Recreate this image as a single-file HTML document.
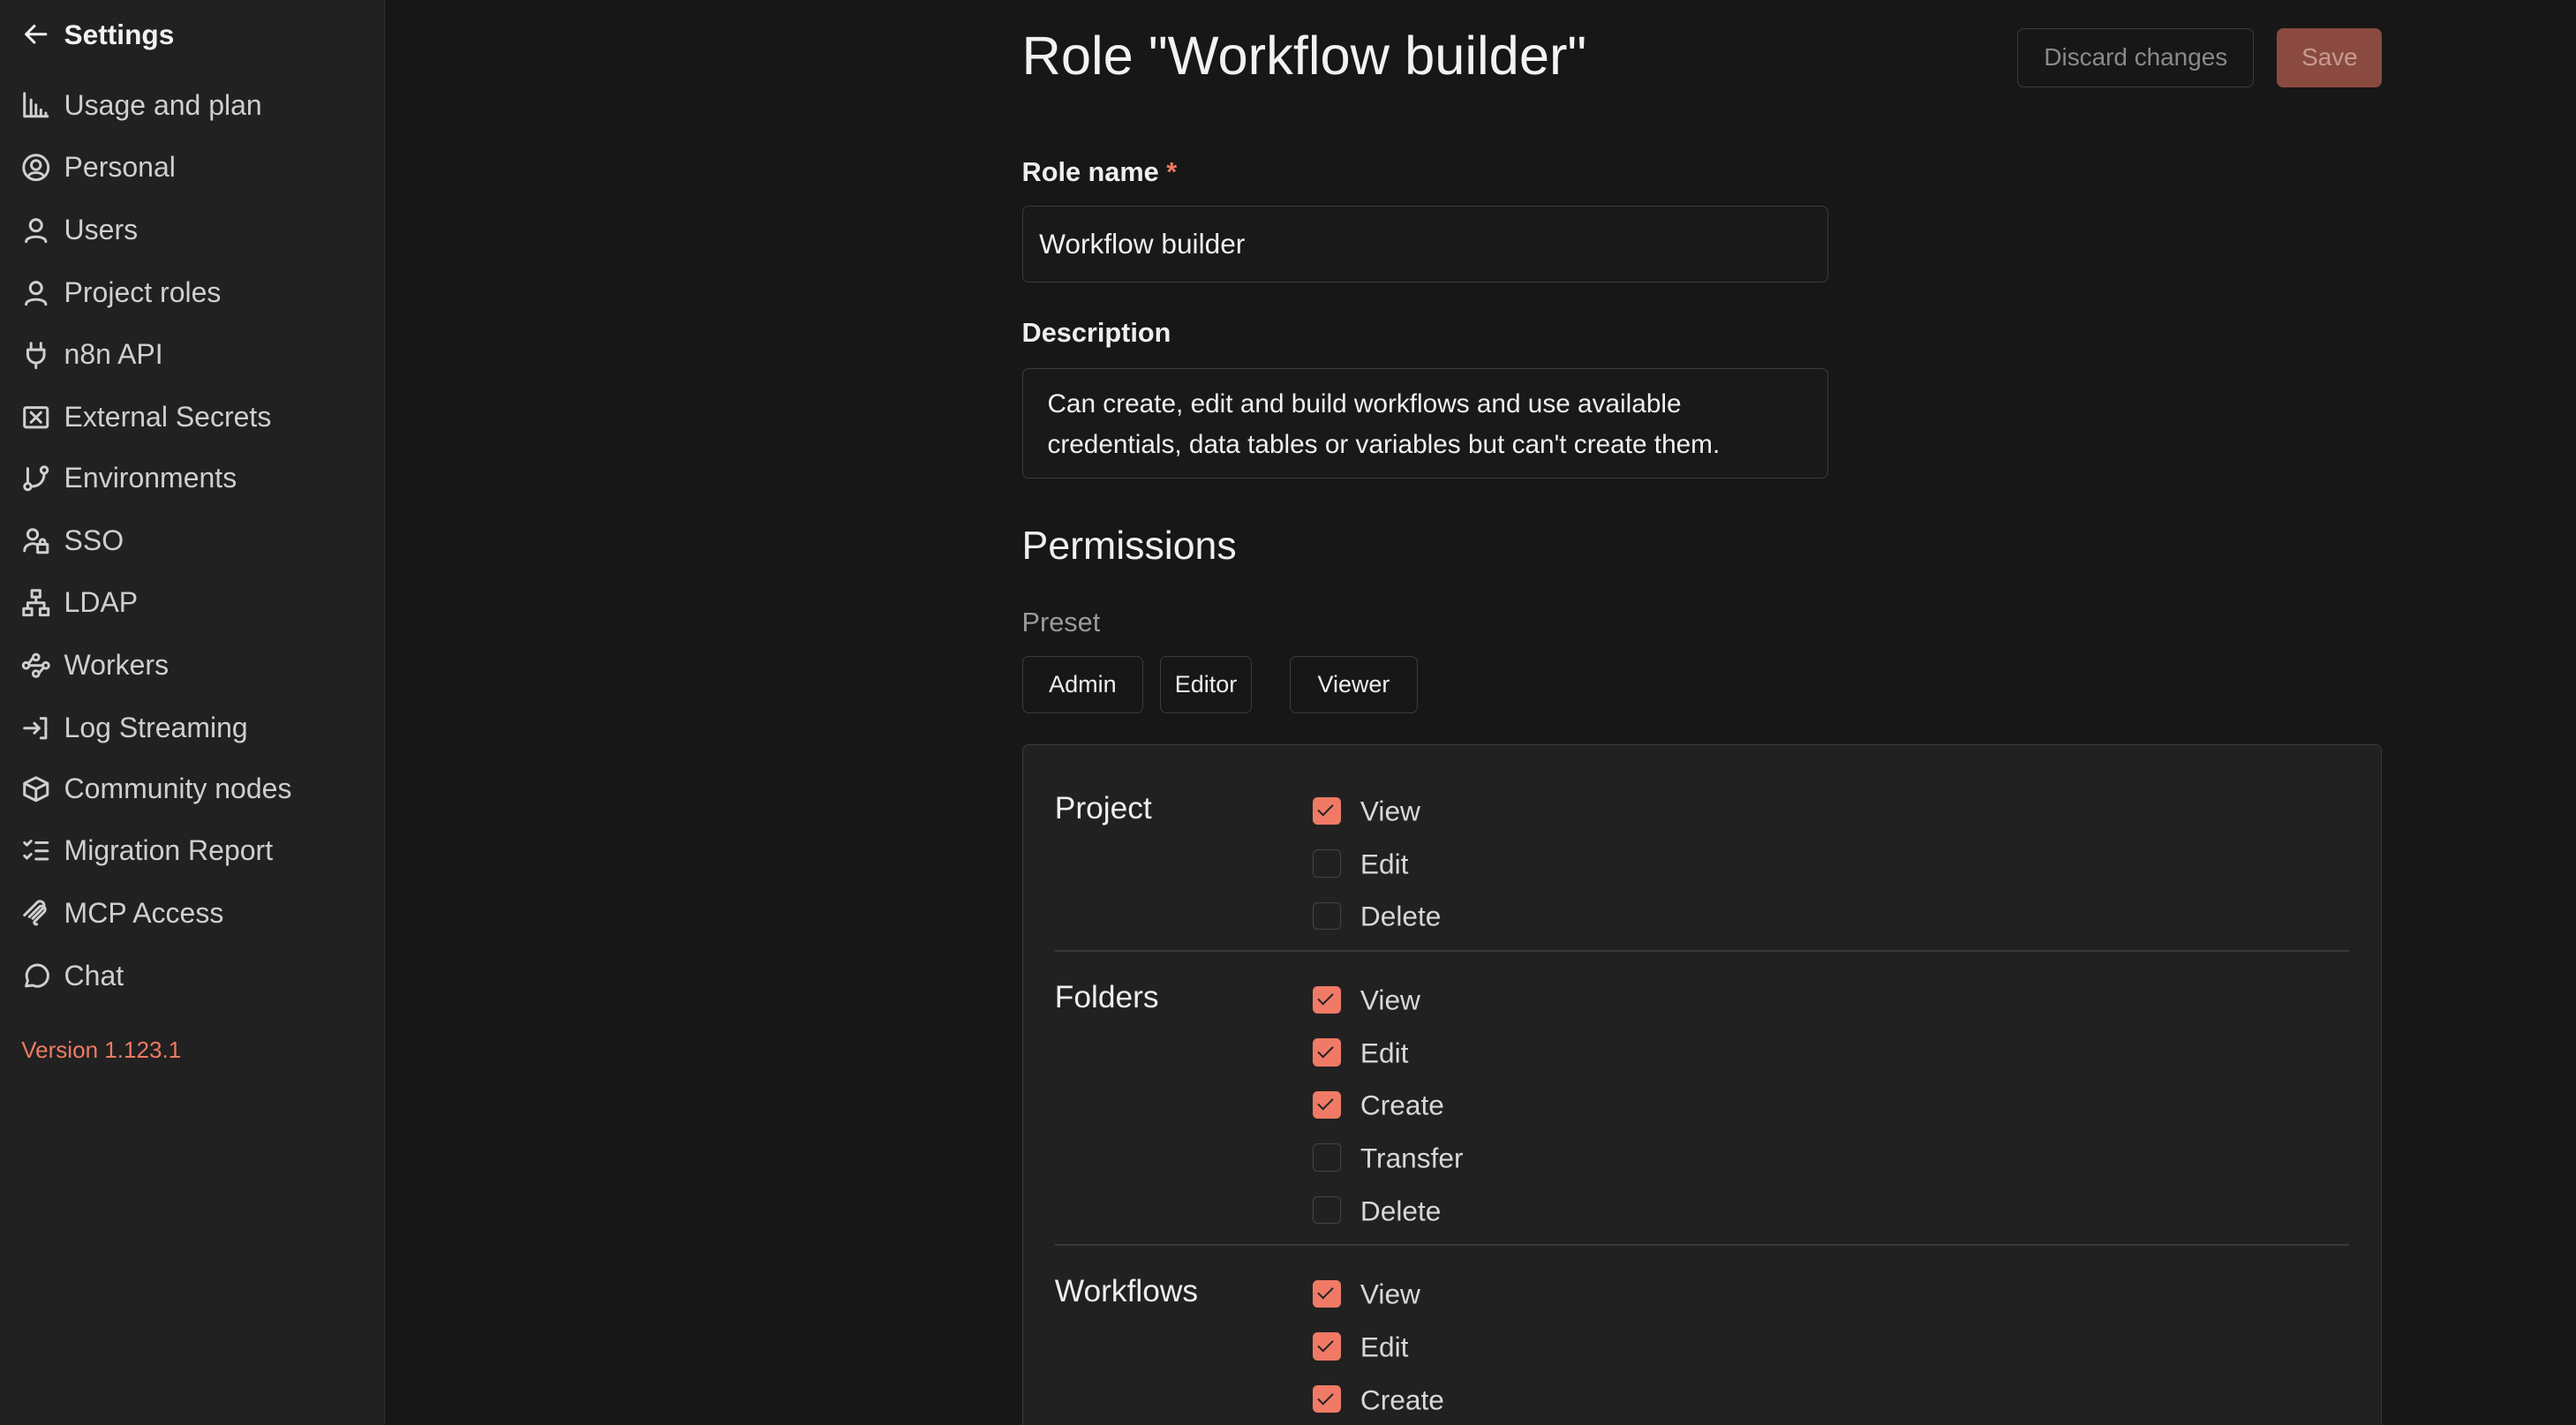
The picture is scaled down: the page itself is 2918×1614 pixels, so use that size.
<!DOCTYPE html>
<html><head><meta charset="utf-8"><style>
html,body{margin:0;padding:0;background:#171717;overflow:hidden;}
html{width:2918px;height:1614px;}
body{width:1568px;height:867px;zoom:1.861;overflow:hidden;position:relative;font-family:"Liberation Sans",sans-serif;color:#e6e6e6;}
.side{position:absolute;left:0;top:0;width:234px;height:880px;background:#212121;border-right:1px solid #2f2f2f;}
.it{position:absolute;left:13px;height:20px;display:flex;align-items:center;font-size:17.2px;color:#cfcfcf;}
.it svg{width:18px;height:18px;margin-right:8px;fill:none;stroke:#cfcfcf;stroke-width:1.6;stroke-linecap:round;stroke-linejoin:round}
.a{position:absolute}
.btn{position:absolute;border:1px solid #3c3c3c;border-radius:4px;display:flex;align-items:center;justify-content:center;font-size:14.5px;box-sizing:border-box}
.cb{position:absolute;left:799px;width:17px;height:17px;box-sizing:border-box;border-radius:3px;border:1px solid #444;}
.cb.on{background:#f07a66;border-color:#f07a66}
.cb.on::after{content:"";position:absolute;left:5px;top:2px;width:4px;height:8px;border:solid #222;border-width:0 1.6px 1.6px 0;transform:rotate(45deg)}
.lb{position:absolute;left:828px;font-size:17px;color:#d8d8d8;transform:translateY(-50%)}
.sec{position:absolute;left:642px;font-size:19px;color:#eee;transform:translateY(-50%)}
.hr{position:absolute;left:642px;width:788px;height:1px;background:#3a3a3a}
</style></head><body>
<div class="side">
<div class="it" style="top:11px;color:#f2f2f2;font-weight:bold;font-size:17px"><svg viewBox="0 0 18 18" style="stroke:#f2f2f2"><path d="M15 9H3M8 4 3 9l5 5"/></svg>Settings</div>
<div class="it" style="top:54px"><svg viewBox="0 0 18 18"><path d="M2 2v14h14M6 15V6M9 15V9M12 15v-3M15 15v-1"/></svg>Usage and plan</div>
<div class="it" style="top:92px"><svg viewBox="0 0 18 18"><circle cx="9" cy="9" r="7.5"/><circle cx="9" cy="7.5" r="2.8"/><path d="M4.5 14c1.5-2.5 7.5-2.5 9 0"/></svg>Personal</div>
<div class="it" style="top:130px"><svg viewBox="0 0 18 18"><circle cx="9" cy="6" r="3.5"/><path d="M3 16c0-4 12-4 12 0"/></svg>Users</div>
<div class="it" style="top:168px"><svg viewBox="0 0 18 18"><circle cx="9" cy="6" r="3.5"/><path d="M3 16c0-4 12-4 12 0"/></svg>Project roles</div>
<div class="it" style="top:206px"><svg viewBox="0 0 18 18"><path d="M6 2v4M12 2v4M4 6h10v3a5 5 0 0 1-10 0zM9 14v3"/></svg>n8n API</div>
<div class="it" style="top:244px"><svg viewBox="0 0 18 18"><rect x="2" y="3" width="14" height="12" rx="1"/><path d="M6 6l6 6M12 6l-6 6"/></svg>External Secrets</div>
<div class="it" style="top:281px"><svg viewBox="0 0 18 18"><circle cx="4" cy="14" r="2"/><circle cx="14" cy="4" r="2"/><path d="M4 12V3M6 14c5 0 8-3 8-8"/></svg>Environments</div>
<div class="it" style="top:319px"><svg viewBox="0 0 18 18"><circle cx="7" cy="5" r="3"/><path d="M2 15c0-4 5-5 7-4"/><rect x="10" y="11" width="6" height="5"/><path d="M11.5 11V9.5a1.5 1.5 0 0 1 3 0V11"/></svg>SSO</div>
<div class="it" style="top:357px"><svg viewBox="0 0 18 18"><rect x="6.5" y="1.5" width="5" height="4"/><rect x="1.5" y="12.5" width="5" height="4"/><rect x="11.5" y="12.5" width="5" height="4"/><path d="M9 5.5V9M4 12.5V9h10v3.5"/></svg>LDAP</div>
<div class="it" style="top:395px"><svg viewBox="0 0 18 18"><circle cx="3" cy="9" r="1.8"/><circle cx="9" cy="4" r="1.8"/><circle cx="9" cy="14" r="1.8"/><circle cx="15" cy="9" r="1.8"/><path d="M5 9h8M7 4.5 4.5 8M11 13.5l2.5-3"/></svg>Workers</div>
<div class="it" style="top:433px"><svg viewBox="0 0 18 18"><path d="M2 9h9M8 6l3 3-3 3M12 3h3v12h-3"/></svg>Log Streaming</div>
<div class="it" style="top:470px"><svg viewBox="0 0 18 18"><path d="M9 2 16 5.5v7L9 16 2 12.5v-7zM2 5.5 9 9l7-3.5M9 9v7"/></svg>Community nodes</div>
<div class="it" style="top:508px"><svg viewBox="0 0 18 18"><path d="M2 4l1.5 1.5L6 3M2 12l1.5 1.5L6 11M9 4h7M9 9h7M9 14h7"/></svg>Migration Report</div>
<div class="it" style="top:546px"><svg viewBox="0 0 18 18"><path d="M2 10 10 2a2.5 2.5 0 0 1 3.5 3.5L7 12M5 11l6-6a2 2 0 0 1 3 3l-6 6a1.2 1.2 0 0 0 1.5 1.5"/></svg>MCP Access</div>
<div class="it" style="top:584px"><svg viewBox="0 0 18 18"><path d="M3 15l1-3.5A6.5 6.5 0 1 1 7 14.5z"/></svg>Chat</div>
<div class="a" style="left:13px;top:631px;font-size:14px;color:#ee7a62">Version 1.123.1</div>
</div>

<div class="a" style="left:622px;top:15px;font-size:33px;color:#f2f2f2">Role "Workflow builder"</div>
<div class="btn" style="left:1228px;top:17px;width:144px;height:36px;color:#8a8a8a;font-size:15px">Discard changes</div>
<div class="btn" style="left:1386px;top:17px;width:64px;height:36px;background:#8a4a3f;border-color:#8a4a3f;color:#c79a90;font-size:15px">Save</div>

<div class="a" style="left:622px;top:95px;font-size:16.5px;font-weight:bold;color:#eee">Role name <span style="color:#ee7a62">*</span></div>
<div class="a" style="left:622px;top:125px;width:491px;height:47px;box-sizing:border-box;border:1px solid #3c3c3c;border-radius:4px;background:#191919;font-size:17px;padding:13px 10px;color:#f0f0f0">Workflow builder</div>
<div class="a" style="left:622px;top:193px;font-size:16.5px;font-weight:bold;color:#eee">Description</div>
<div class="a" style="left:622px;top:224px;width:491px;height:67px;box-sizing:border-box;border:1px solid #3c3c3c;border-radius:4px;background:#191919;font-size:16px;line-height:25px;padding:9px 15px;color:#f0f0f0">Can create, edit and build workflows and use available credentials, data tables or variables but can't create them.</div>
<div class="a" style="left:622px;top:319px;font-size:24px;color:#f0f0f0">Permissions</div>
<div class="a" style="left:622px;top:369px;font-size:16.5px;color:#9a9a9a">Preset</div>
<div class="btn" style="left:622px;top:399px;width:74px;height:35px;color:#eee">Admin</div>
<div class="btn" style="left:706px;top:399px;width:56px;height:35px;color:#eee">Editor</div>
<div class="btn" style="left:785px;top:399px;width:78px;height:35px;color:#eee">Viewer</div>

<div class="a" style="left:622px;top:453px;width:828px;height:420px;box-sizing:border-box;border:1px solid #3a3a3a;border-radius:4px;background:#212121"></div>
<div class="sec" style="top:492px">Project</div>
<div class="cb on" style="top:485px"></div><div class="lb" style="top:494px">View</div>
<div class="cb" style="top:517px"></div><div class="lb" style="top:526px">Edit</div>
<div class="cb" style="top:549px"></div><div class="lb" style="top:558px">Delete</div>
<div class="hr" style="top:578px"></div>
<div class="sec" style="top:607px">Folders</div>
<div class="cb on" style="top:600px"></div><div class="lb" style="top:609px">View</div>
<div class="cb on" style="top:632px"></div><div class="lb" style="top:641px">Edit</div>
<div class="cb on" style="top:664px"></div><div class="lb" style="top:673px">Create</div>
<div class="cb" style="top:696px"></div><div class="lb" style="top:705px">Transfer</div>
<div class="cb" style="top:728px"></div><div class="lb" style="top:737px">Delete</div>
<div class="hr" style="top:757px"></div>
<div class="sec" style="top:786px">Workflows</div>
<div class="cb on" style="top:779px"></div><div class="lb" style="top:788px">View</div>
<div class="cb on" style="top:811px"></div><div class="lb" style="top:820px">Edit</div>
<div class="cb on" style="top:843px"></div><div class="lb" style="top:852px">Create</div>
</body></html>
